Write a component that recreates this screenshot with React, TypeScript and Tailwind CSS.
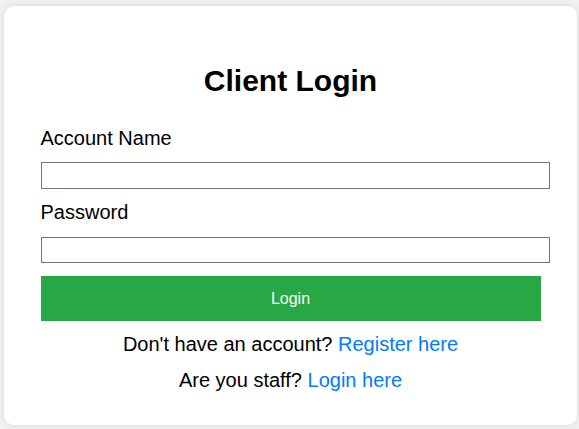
import React from "react";

export default function App() {
  return (
    <div
      className="w-[579px] h-[429px] bg-[#f2f2f2] overflow-hidden"
      style={{ fontFamily: '"Liberation Sans", Arial, sans-serif' }}
    >
      <div className="ml-[4px] mt-[6px] w-[573px] h-[419px] bg-white rounded-[10px] shadow-[0_0_10px_rgba(0,0,0,0.1)] flex flex-col items-center">
        <div className="w-[500px] flex flex-col pt-[58px]">
          <h2 className="text-[30px] leading-[34px] font-bold text-center text-black">
            Client Login
          </h2>
          <label className="mt-[29px] text-[20px] leading-[23px] text-black">
            Account Name
          </label>
          <input
            type="text"
            className="mt-[12px] w-[509px] h-[27px] border border-[#767676] bg-white rounded-none"
          />
          <label className="mt-[12px] text-[20px] leading-[23px] text-black">
            Password
          </label>
          <input
            type="password"
            className="mt-[13px] w-[509px] h-[26px] border border-[#767676] bg-white rounded-none"
          />
          <button className="mt-[13px] w-[500px] h-[45px] bg-[#28a745] text-white text-[16px] leading-[18px]">
            Login
          </button>
          <p className="mt-[12px] text-[20px] leading-[23px] text-center text-black">
            Don't have an account?{" "}
            <a className="text-[#007bff]">Register here</a>
          </p>
          <p className="mt-[13px] text-[20px] leading-[23px] text-center text-black">
            Are you staff? <a className="text-[#007bff]">Login here</a>
          </p>
        </div>
      </div>
    </div>
  );
}
